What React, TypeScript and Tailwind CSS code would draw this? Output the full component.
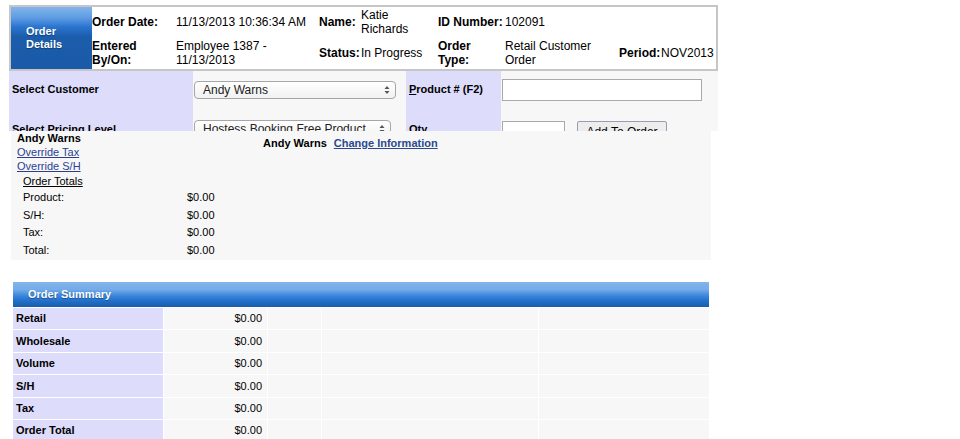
import React from "react";

const font = { fontFamily: '"Liberation Sans", Arial, Helvetica, sans-serif' };

function SelectBox({ text, w }: { text: string; w: string }) {
  return (
    <div
      className={`${w} h-[18px] rounded-[4px] border border-[#a6a6a6] bg-[linear-gradient(to_bottom,#ffffff,#f1f1f1)] flex items-center justify-between pl-[8px] pr-[5px] text-[12px] text-[#222]`}
    >
      <span className="leading-none">{text}</span>
      <svg width="6" height="10" viewBox="0 0 6 10">
        <path d="M3 1 L5.5 4 H0.5 Z" fill="#555" />
        <path d="M3 9 L5.5 6 H0.5 Z" fill="#555" />
      </svg>
    </div>
  );
}

export default function App() {
  const rows = ["Retail", "Wholesale", "Volume", "S/H", "Tax", "Order Total"];
  return (
    <div className="w-[960px] h-[439px] overflow-hidden bg-white text-black" style={font}>
      {/* Order details box */}
      <div className="ml-[9px] mt-[5px] w-[709px] h-[66px] border-2 border-[#c6c6c6] flex">
        <div className="w-[81px] h-full bg-[linear-gradient(to_bottom,#82b4ea_0%,#5c9be3_18%,#2a74d0_32%,#1b5cab_48%,#1a5aa8_100%)] flex items-center pl-[15px]">
          <div className="text-white font-bold text-[11px] leading-[13px] [text-shadow:0_1px_1px_rgba(0,0,0,0.35)]">
            Order
            <br />
            Details
          </div>
        </div>
        <div className="flex-1 grid grid-cols-[84px_143px_42px_77px_67px_114px_42px_1fr] grid-rows-[29px_33px] items-center text-[12px] leading-[14px]">
          <div className="font-bold">Order Date:</div>
          <div>11/13/2013 10:36:34 AM</div>
          <div className="font-bold">Name:</div>
          <div>
            Katie
            <br />
            Richards
          </div>
          <div className="font-bold">ID Number:</div>
          <div>102091</div>
          <div></div>
          <div></div>
          <div className="font-bold">
            Entered
            <br />
            By/On:
          </div>
          <div>
            Employee 1387 -
            <br />
            11/13/2013
          </div>
          <div className="font-bold">Status:</div>
          <div>In Progress</div>
          <div className="font-bold">
            Order
            <br />
            Type:
          </div>
          <div>
            Retail Customer
            <br />
            Order
          </div>
          <div className="font-bold">Period:</div>
          <div>NOV2013</div>
        </div>
      </div>

      {/* Form area (clipped) */}
      <div className="ml-[9px] w-[709px] h-[60px] overflow-hidden bg-[#f7f7f7]">
        <div className="grid grid-cols-[184px_213px_95px_1fr] grid-rows-[37px_42px]">
          <div className="bg-[#dddcfb] flex items-center pl-[3px] text-[11px] font-bold">Select Customer</div>
          <div className="flex items-center pl-[1px]">
            <SelectBox text="Andy Warns" w="w-[202px]" />
          </div>
          <div className="bg-[#dddcfb] flex items-center pl-[3px] text-[11px] font-bold">
            <span>
              <span className="underline">P</span>roduct # (F2)
            </span>
          </div>
          <div className="flex items-center pl-[1px]">
            <div className="w-[200px] h-[22px] bg-white border border-[#a9a9a9]"></div>
          </div>
          <div className="bg-[#dddcfb] flex items-center pl-[3px] text-[11px] font-bold">Select Pricing Level</div>
          <div className="flex items-center pl-[1px]">
            <SelectBox text="Hostess Booking Free Product" w="w-[197px]" />
          </div>
          <div className="bg-[#dddcfb] flex items-center pl-[3px] text-[11px] font-bold">Qty</div>
          <div className="flex items-start pt-[13px] pl-[1px] gap-[12px]">
            <div className="w-[63px] h-[22px] bg-white border border-[#a9a9a9]"></div>
            <div className="w-[90px] h-[21px] bg-[#ededed] border border-[#9c9cb0] rounded-[2px] text-[12px] flex items-center justify-center">
              Add To Order
            </div>
          </div>
        </div>
      </div>

      {/* Customer panel */}
      <div className="ml-[11px] w-[700px] h-[129px] bg-[#f7f7f7] flex text-[11px]">
        <div className="w-[252px] shrink-0">
          <div className="pl-[6px] leading-[14px]">
            <div className="font-bold">Andy Warns</div>
            <div>
              <a className="underline text-[#2b3f91]">Override Tax</a>
            </div>
            <div>
              <a className="underline text-[#2b3f91]">Override S/H</a>
            </div>
          </div>
          <div className="pl-[12px] leading-[15px] mt-[1px]">
            <span className="underline">Order Totals</span>
          </div>
          <div className="pl-[12px] leading-[17.5px]">
            {[
              ["Product:", "$0.00"],
              ["S/H:", "$0.00"],
              ["Tax:", "$0.00"],
              ["Total:", "$0.00"],
            ].map(([l, v]) => (
              <div key={l} className="flex">
                <div className="w-[164px]">{l}</div>
                <div>{v}</div>
              </div>
            ))}
          </div>
        </div>
        <div className="pt-[5px] leading-[14px] font-bold flex gap-[7px] items-start">
          <span>Andy Warns</span>
          <a className="underline text-[#2b4a8e]">Change Information</a>
        </div>
      </div>

      {/* Order Summary */}
      <div className="ml-[13px] mt-[22px] w-[696px]">
        <div className="h-[25px] bg-[linear-gradient(to_bottom,#84b5ea_0%,#74abe8_30%,#3c86dc_55%,#2170cb_75%,#1a5ca8_100%)] flex items-center pl-[15px] text-white font-bold text-[11px] [text-shadow:0_1px_1px_rgba(0,0,0,0.35)]">
          Order Summary
        </div>
        {rows.map((r) => (
          <div key={r} className="flex border-t border-white h-[22.4px] text-[11px]">
            <div className="w-[150px] bg-[#dddcfb] font-bold flex items-center pl-[3px]">{r}</div>
            <div className="w-[103px] ml-[1px] bg-[#f7f7f7] flex items-center justify-end pr-[5px]">$0.00</div>
            <div className="w-[53px] ml-[1px] bg-[#f7f7f7]"></div>
            <div className="w-[216px] ml-[1px] bg-[#f7f7f7]"></div>
            <div className="w-[170px] ml-[1px] bg-[#f7f7f7]"></div>
          </div>
        ))}
      </div>
    </div>
  );
}
